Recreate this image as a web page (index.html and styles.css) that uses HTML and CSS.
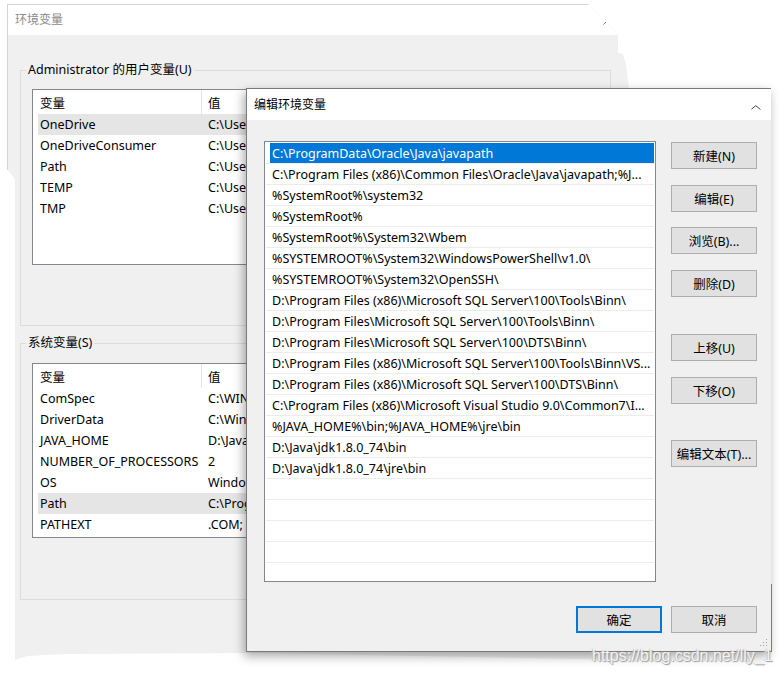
FILE: index.html
```html
<!DOCTYPE html>
<html lang="zh-CN">
<head>
<meta charset="utf-8">
<title>环境变量</title>
<link rel="stylesheet" href="styles.css">
</head>
<body>
<div class="env">
  <div class="env-title">
    <span>环境变量</span>
    <svg class="close" width="11" height="11" viewBox="0 0 11 11"><path d="M0.5 0.5 L10.5 10.5 M10.5 0.5 L0.5 10.5" stroke="#7a7a7a" stroke-width="1" fill="none"/></svg>
  </div>
  <div class="env-body">
    <div class="group user">
      <span class="legend">Administrator 的用户变量(U)</span>
      <div class="lv lv-user">
        <div class="lv-head"><span class="c1">变量</span><span class="c2">值</span></div>
        <div class="lv-row hl"><span class="c1">OneDrive</span><span class="c2">C:\Use</span></div>
        <div class="lv-row"><span class="c1">OneDriveConsumer</span><span class="c2">C:\Use</span></div>
        <div class="lv-row"><span class="c1">Path</span><span class="c2">C:\Use</span></div>
        <div class="lv-row"><span class="c1">TEMP</span><span class="c2">C:\Use</span></div>
        <div class="lv-row"><span class="c1">TMP</span><span class="c2">C:\Use</span></div>
      </div>
    </div>
    <div class="group sys">
      <span class="legend">系统变量(S)</span>
      <div class="lv lv-sys">
        <div class="lv-head"><span class="c1">变量</span><span class="c2">值</span></div>
        <div class="lv-row"><span class="c1">ComSpec</span><span class="c2">C:\WIN</span></div>
        <div class="lv-row"><span class="c1">DriverData</span><span class="c2">C:\Win</span></div>
        <div class="lv-row"><span class="c1">JAVA_HOME</span><span class="c2">D:\Java</span></div>
        <div class="lv-row"><span class="c1">NUMBER_OF_PROCESSORS</span><span class="c2">2</span></div>
        <div class="lv-row"><span class="c1">OS</span><span class="c2">Windo</span></div>
        <div class="lv-row hl"><span class="c1">Path</span><span class="c2">C:\Prog</span></div>
        <div class="lv-row"><span class="c1">PATHEXT</span><span class="c2">.COM;</span></div>
      </div>
    </div>
  </div>
</div>

<div class="edit">
  <div class="edit-title">
    <span>编辑环境变量</span>
    <svg class="caret" width="10" height="5" viewBox="0 0 10 5"><path d="M0.5 4.2 L4.8 0.6 L9.5 4.6" stroke="#444" stroke-width="1" fill="none"/></svg>
  </div>
  <div class="edit-body">
    <div class="edit-main">
      <div class="plist">
        <div class="prow sel">C:\ProgramData\Oracle\Java\javapath</div>
        <div class="prow">C:\Program Files (x86)\Common Files\Oracle\Java\javapath;%J...</div>
        <div class="prow">%SystemRoot%\system32</div>
        <div class="prow">%SystemRoot%</div>
        <div class="prow">%SystemRoot%\System32\Wbem</div>
        <div class="prow">%SYSTEMROOT%\System32\WindowsPowerShell\v1.0\</div>
        <div class="prow">%SYSTEMROOT%\System32\OpenSSH\</div>
        <div class="prow">D:\Program Files (x86)\Microsoft SQL Server\100\Tools\Binn\</div>
        <div class="prow">D:\Program Files\Microsoft SQL Server\100\Tools\Binn\</div>
        <div class="prow">D:\Program Files\Microsoft SQL Server\100\DTS\Binn\</div>
        <div class="prow">D:\Program Files (x86)\Microsoft SQL Server\100\Tools\Binn\VS...</div>
        <div class="prow">D:\Program Files (x86)\Microsoft SQL Server\100\DTS\Binn\</div>
        <div class="prow">C:\Program Files (x86)\Microsoft Visual Studio 9.0\Common7\I...</div>
        <div class="prow">%JAVA_HOME%\bin;%JAVA_HOME%\jre\bin</div>
        <div class="prow">D:\Java\jdk1.8.0_74\bin</div>
        <div class="prow">D:\Java\jdk1.8.0_74\jre\bin</div>
        <div class="prow"></div>
        <div class="prow"></div>
        <div class="prow"></div>
        <div class="prow"></div>
        <div class="prow"></div>
      </div>
      <div class="btns">
        <div class="btn">新建(N)</div>
        <div class="btn b-edit">编辑(E)</div>
        <div class="btn b-browse">浏览(B)...</div>
        <div class="btn b-del">删除(D)</div>
        <div class="btn b-up">上移(U)</div>
        <div class="btn b-down">下移(O)</div>
        <div class="btn b-text">编辑文本(T)...</div>
      </div>
    </div>
    <div class="foot">
      <div class="btn default">确定</div>
      <div class="btn">取消</div>
    </div>
  </div>
  <svg class="grip" width="8" height="8" viewBox="0 0 8 8">
    <rect x="6" y="0" width="1" height="1" fill="#a0a0a0"/>
    <rect x="3" y="3" width="1" height="1" fill="#a0a0a0"/>
    <rect x="6" y="3" width="1" height="1" fill="#a0a0a0"/>
    <rect x="0" y="6" width="1" height="1" fill="#a0a0a0"/>
    <rect x="3" y="6" width="1" height="1" fill="#a0a0a0"/>
    <rect x="6" y="6" width="1" height="1" fill="#a0a0a0"/>
  </svg>
</div>

<div class="watermark">https://blog.csdn.net/lly_1</div>
</body>
</html>
```

FILE: styles.css
```css
* { box-sizing: border-box; }
html, body { margin: 0; padding: 0; }
body {
  width: 779px;
  height: 676px;
  background: #fff;
  font-family: "Noto Sans", "Noto Sans CJK SC", sans-serif;
  font-size: 12.5px;
  color: #000;
  position: relative;
  overflow: hidden;
}

/* background dialog */
.env {
  position: absolute;
  left: 7px;
  top: 4px;
  width: 628px;
  height: 656px;
  border-top: 1px solid #d4d4d4;
  border-left: 1px solid #d4d4d4;
  background: #f0f0f0;
  display: flex;
  flex-direction: column;
  clip-path: polygon(0 0, 581px 0, 611px 30px, 611px 49px, 616px 50px, 619px 60px, 622px 84px, 622px 656px, 250px 649px, 60px 650px, 20px 652px, 8px 656px, 8px 175px, 0 165px);
}
.env-title {
  height: 30px;
  flex: none;
  background: #fff;
  display: flex;
  align-items: center;
  padding: 0 21px 0 7px;
  color: #8c8c8c;
  line-height: 16px;
  font-size: 12px;
}
.env-title .close { margin-left: auto; margin-top: -1px; }
.env-body {
  flex: 1;
  padding: 35px 0 0 12px;
}
.group {
  width: 591px;
  border: 1px solid #dcdcdc;
}
.group.user { height: 256px; }
.group.sys { height: 257px; margin-top: 17px; }
.legend {
  display: block;
  width: max-content;
  height: 16px;
  line-height: 16px;
  margin: -9px 0 0 5px;
  padding: 0 2px;
  background: #f0f0f0;
}
.lv {
  margin-left: 11px;
  width: 214px;
  border: 1px solid #828790;
  border-right: none;
  background: #fff;
  overflow: hidden;
}
.lv-user { margin-top: 11px; height: 176px; }
.lv-sys { margin-top: 12px; height: 175px; }
.lv-head {
  display: flex;
  height: 24px;
  margin-left: 5px;
}
.lv-head .c1 {
  border-right: 1px solid #e5e5e5;
}
.lv-head span, .lv-row span {
  display: flex;
  align-items: center;
  white-space: nowrap;
}
.c1 { width: 164px; padding-left: 2px; flex: none; }
.c2 { padding-left: 6px; }
.lv-row {
  display: flex;
  height: 21px;
  margin-left: 5px;
}
.lv-row.hl { background: #e5e5e5; }

/* foreground dialog */
.edit {
  position: absolute;
  left: 246px;
  top: 88px;
  width: 525px;
  height: 564px;
  border: 1px solid #7a7a7a;
  border-right: none;
  background: #f0f0f0;
  box-shadow: -2px 4px 10px rgba(0, 0, 0, 0.35);
  display: flex;
  flex-direction: column;
}
.edit::after {
  content: "";
  position: absolute;
  right: -1px;
  bottom: -1px;
  width: 1px;
  height: 68px;
  background: #7a7a7a;
}
.edit-title {
  height: 31px;
  flex: none;
  background: #fff;
  display: flex;
  align-items: center;
  padding: 0 10px 0 7px;
  line-height: 16px;
  font-size: 12px;
}
.edit-title .caret { margin-left: auto; margin-top: 5px; }
.edit-body {
  flex: 1;
  padding: 21px 14px 0 17px;
}
.edit-main { display: flex; }
.plist {
  width: 392px;
  height: 441px;
  border: 1px solid #828790;
  background: #fff;
  padding: 1px;
  overflow: hidden;
  flex: none;
}
.prow {
  height: 21px;
  border-bottom: 1px solid #ececec;
  padding-left: 6px;
  line-height: 21px;
  white-space: nowrap;
  overflow: hidden;
}
.prow.sel {
  background: linear-gradient(to right, transparent 4px, #0078d7 4px);
  color: #fff;
}
.btns {
  margin-left: 15px;
  width: 86px;
  display: flex;
  flex-direction: column;
  padding-top: 1px;
}
.btn {
  height: 27px;
  width: 86px;
  background: #e1e1e1;
  border: 1px solid #adadad;
  display: flex;
  align-items: center;
  justify-content: center;
  white-space: nowrap;
}
.b-edit { margin-top: 16px; }
.b-browse { margin-top: 15px; }
.b-del { margin-top: 16px; }
.b-up { margin-top: 37px; }
.b-down { margin-top: 16px; }
.b-text { margin-top: 36px; }
.foot {
  display: flex;
  justify-content: flex-end;
  gap: 9px;
  margin-top: 24px;
}
.btn.default { border: 2px solid #0078d7; }
.grip {
  position: absolute;
  right: 3px;
  bottom: 4px;
}

.watermark {
  position: absolute;
  left: 592px;
  top: 647px;
  font-family: "Liberation Sans", Arial, sans-serif;
  font-size: 16px;
  line-height: 18px;
  color: #f2f2f2;
  text-shadow: 1px 1px 1px #9a9a9a, -1px 0 1px #c0c0c0;
  white-space: nowrap;
}
```
